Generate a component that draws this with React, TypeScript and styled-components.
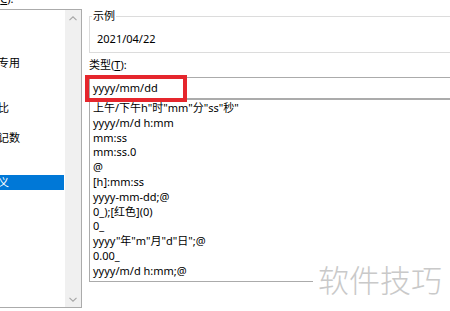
import React from "react";
import styled, { createGlobalStyle } from "styled-components";

const Global = createGlobalStyle`
  html, body { margin: 0; padding: 0; background: #ffffff; }
  body {
    width: 450px;
    height: 311px;
    overflow: hidden;
    font-family: "Noto Sans", "Noto Sans CJK SC", sans-serif;
    font-size: 11px;
    color: #000;
  }
  * { box-sizing: border-box; }
`;

const Dialog = styled.div`
  position: relative;
  display: flex;
  align-items: flex-start;
  width: 450px;
  height: 311px;
  overflow: hidden;
  background: #ffffff;
`;

const LeftColumn = styled.div`
  flex: none;
  display: flex;
  flex-direction: column;
  width: 109px;
  margin-left: -27px;
  margin-top: -8px;
`;

const FieldLabel = styled.div<{ $gap?: number }>`
  line-height: 14px;
  height: 14px;
  white-space: nowrap;
  margin-top: ${(p) => p.$gap ?? 0}px;
  padding-left: ${(p) => (p.$gap === undefined ? 2 : 0)}px;
  u { text-decoration: underline; text-underline-offset: 1px; }
`;

const CategoryBox = styled.div`
  margin-top: 3px;
  height: 299px;
  display: flex;
  border: 1px solid #ababab;
  background: #fff;
`;

const CategoryItems = styled.div`
  flex: 1;
  min-width: 0;
  margin-right: 1px;
  display: flex;
  flex-direction: column;
  overflow: hidden;
`;

const CategoryItem = styled.div<{ $selected?: boolean }>`
  height: 15px;
  line-height: 15px;
  padding-left: 2px;
  white-space: nowrap;
  background: ${(p) => (p.$selected ? "#0078d7" : "transparent")};
  color: ${(p) => (p.$selected ? "#ffffff" : "#000000")};
`;

const ScrollBar = styled.div`
  flex: none;
  width: 16px;
  background: #f0f0f0;
  display: flex;
  flex-direction: column;
  justify-content: space-between;
`;

const ScrollArrow = styled.div<{ $down?: boolean }>`
  height: 17px;
  display: flex;
  justify-content: center;
  align-items: ${(p) => (p.$down ? "flex-end" : "flex-start")};
  padding-top: ${(p) => (p.$down ? 0 : 6)}px;
  padding-bottom: ${(p) => (p.$down ? 5 : 0)}px;
`;

const RightColumn = styled.div`
  position: relative;
  flex: none;
  width: 400px;
  margin-left: 7px;
  display: flex;
  flex-direction: column;
`;

const GroupBox = styled.div`
  position: relative;
  margin-top: 16px;
  height: 37px;
  border: 1px solid #dcdcdc;
  padding: 15px 0 0 7px;
  line-height: 14px;
`;

const GroupLegend = styled.span`
  position: absolute;
  top: -8px;
  left: 2px;
  padding: 0 1px;
  line-height: 14px;
  background: #ffffff;
`;

const TextBox = styled.div`
  margin-top: 5px;
  height: 22px;
  border: 1px solid #ababab;
  padding-left: 3px;
  line-height: 20px;
  white-space: nowrap;
`;

const FormatList = styled.div`
  height: 183px;
  border: 1px solid #ababab;
  padding: 1px 0 0 3px;
  overflow: hidden;
`;

const FormatRow = styled.div`
  height: 14.8px;
  line-height: 14.8px;
  white-space: nowrap;
`;

const Highlight = styled.div`
  position: absolute;
  left: -4px;
  top: 75px;
  width: 102px;
  height: 27px;
  border: 4px solid #e5262d;
  pointer-events: none;
`;

const Watermark = styled.div`
  position: absolute;
  left: 313px;
  top: 258px;
  width: 137px;
  height: 42px;
  padding-left: 5px;
  background: #ffffff;
  color: #c9c9c9;
  font-family: "Noto Sans CJK SC", sans-serif;
  font-weight: 300;
  font-size: 31px;
  line-height: 42px;
  white-space: nowrap;
`;

const Chevron = ({ down }: { down?: boolean }) => (
  <svg width="8" height="5" viewBox="0 0 8 5">
    <polyline
      points={down ? "0.5,0.8 4,4.2 7.5,0.8" : "0.5,4.2 4,0.8 7.5,4.2"}
      fill="none"
      stroke="#a6a6a6"
      strokeWidth="1.1"
    />
  </svg>
);

const categories = [
  "常规",
  "数值",
  "货币",
  "会计专用",
  "日期",
  "时间",
  "百分比",
  "分数",
  "科学记数",
  "文本",
  "特殊",
  "自定义",
];

const formats = [
  '上午/下午h"时"mm"分"ss"秒"',
  "yyyy/m/d h:mm",
  "mm:ss",
  "mm:ss.0",
  "@",
  "[h]:mm:ss",
  "yyyy-mm-dd;@",
  "0_);[红色](0)",
  "0_",
  'yyyy"年"m"月"d"日";@',
  "0.00_",
  "yyyy/m/d h:mm;@",
];

export default function App() {
  return (
    <>
      <Global />
      <Dialog>
        <LeftColumn>
          <FieldLabel>
            分类(<u>C</u>):
          </FieldLabel>
          <CategoryBox>
            <CategoryItems>
              {categories.map((c) => (
                <CategoryItem key={c} $selected={c === "自定义"}>
                  {c}
                </CategoryItem>
              ))}
            </CategoryItems>
            <ScrollBar>
              <ScrollArrow>
                <Chevron />
              </ScrollArrow>
              <ScrollArrow $down>
                <Chevron down />
              </ScrollArrow>
            </ScrollBar>
          </CategoryBox>
        </LeftColumn>
        <RightColumn>
          <GroupBox>
            <GroupLegend>示例</GroupLegend>
            2021/04/22
          </GroupBox>
          <FieldLabel $gap={5}>
            类型(<u>T</u>):
          </FieldLabel>
          <TextBox>yyyy/mm/dd</TextBox>
          <FormatList>
            {formats.map((f) => (
              <FormatRow key={f}>{f}</FormatRow>
            ))}
          </FormatList>
          <Highlight />
        </RightColumn>
        <Watermark>软件技巧</Watermark>
      </Dialog>
    </>
  );
}
